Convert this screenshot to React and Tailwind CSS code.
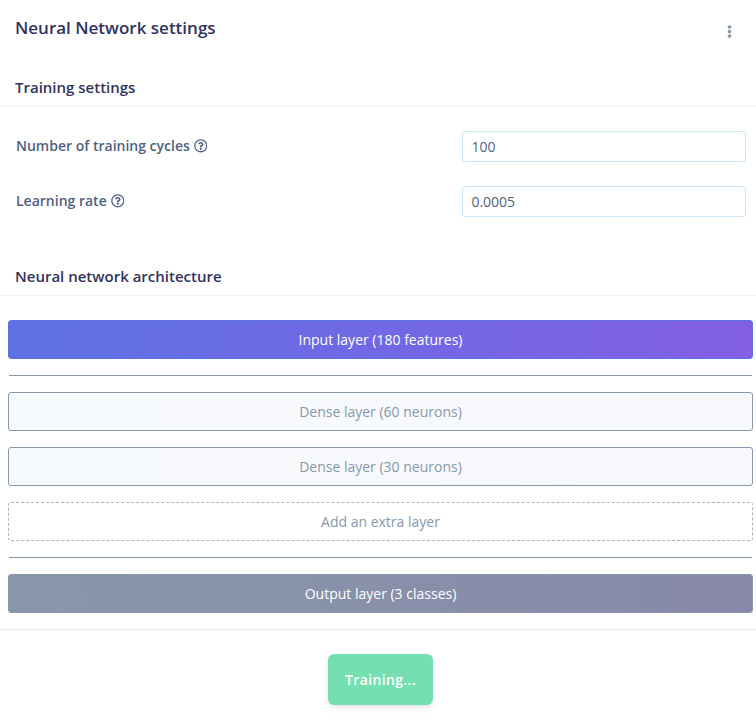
import { FaRegQuestionCircle, FaEllipsisV } from "react-icons/fa";

function SectionTitle({ children, className }) {
  return (
    <h4 className={`border-b border-[#f0f0f1] pl-[15px] text-[15px] leading-[22px] font-semibold text-[#32325d] ${className}`}>
      {children}
    </h4>
  );
}

function Field({ label, value }) {
  return (
    <div className="flex h-[31px] items-center justify-between pr-[10px] pl-4">
      <label className="flex items-center gap-1 pb-[2px] text-[14px] leading-[21px] font-semibold text-[#525f7f]">
        <span>{label}</span>
        <FaRegQuestionCircle className="mt-px size-[13.6px]" />
      </label>
      <input
        className="h-[31px] w-[284px] rounded-[3px] border border-[#cce5f3] bg-white px-[8.4px] pb-px text-[14px] text-[#525f7f] outline-none"
        defaultValue={value}
      />
    </div>
  );
}

function Layer({ children, className }) {
  return (
    <div className={`flex h-[39px] items-center justify-center rounded-[3px] border text-[14px] leading-[21px] ${className}`}>
      {children}
    </div>
  );
}

export default function App() {
  return (
    <main className="h-[719px] w-full overflow-hidden bg-white font-['Open_Sans',sans-serif]">
      <header className="flex h-[76px] items-start justify-between pt-[15px] pr-5 pl-[15px]">
        <h3 className="text-[17px] leading-[26px] font-semibold text-[#32325d]">Neural Network settings</h3>
        <FaEllipsisV className="mt-[10px] h-[13px] w-[13px] text-[#8898aa]" />
      </header>

      <SectionTitle className="h-[31px]">Training settings</SectionTitle>
      <div className="flex h-[189px] flex-col">
        <div className="flex flex-col gap-6 pt-6">
          <Field label="Number of training cycles" value="100" />
          <Field label="Learning rate" value="0.0005" />
        </div>
        <SectionTitle className="mt-auto h-[31px]">Neural network architecture</SectionTitle>
      </div>

      <section className="flex flex-col gap-4 border-b border-[#e9ecef] pt-6 pr-[3px] pb-4 pl-2">
        <Layer className="border-[#5e72e4] bg-linear-[87deg,#5e72e4,#825ee4] text-white">Input layer (180 features)</Layer>
        <hr className="mx-px border-[#8898aa]" />
        <Layer className="border-[#8898aa] bg-linear-[87deg,#f7fafc,#f7f8fc] text-[#8898aa]">Dense layer (60 neurons)</Layer>
        <Layer className="border-[#8898aa] bg-linear-[87deg,#f7fafc,#f7f8fc] text-[#8898aa]">Dense layer (30 neurons)</Layer>
        <Layer className="border-dashed border-[#adb5bd] text-[#8898aa]">Add an extra layer</Layer>
        <hr className="mx-px border-[#8898aa]" />
        <Layer className="border-[#8898aa] bg-linear-[87deg,#8898aa,#8888aa] text-white">Output layer (3 classes)</Layer>
      </section>

      <footer className="flex justify-center pt-6 pl-[5px]">
        <button className="h-[51px] w-[105px] rounded-[6px] bg-[#2dce89] text-[14px] font-semibold tracking-[0.35px] text-white opacity-65 shadow-[0_4px_6px_rgba(50,50,93,0.11),0_1px_3px_rgba(0,0,0,0.08)]">
          Training...
        </button>
      </footer>
    </main>
  );
}
